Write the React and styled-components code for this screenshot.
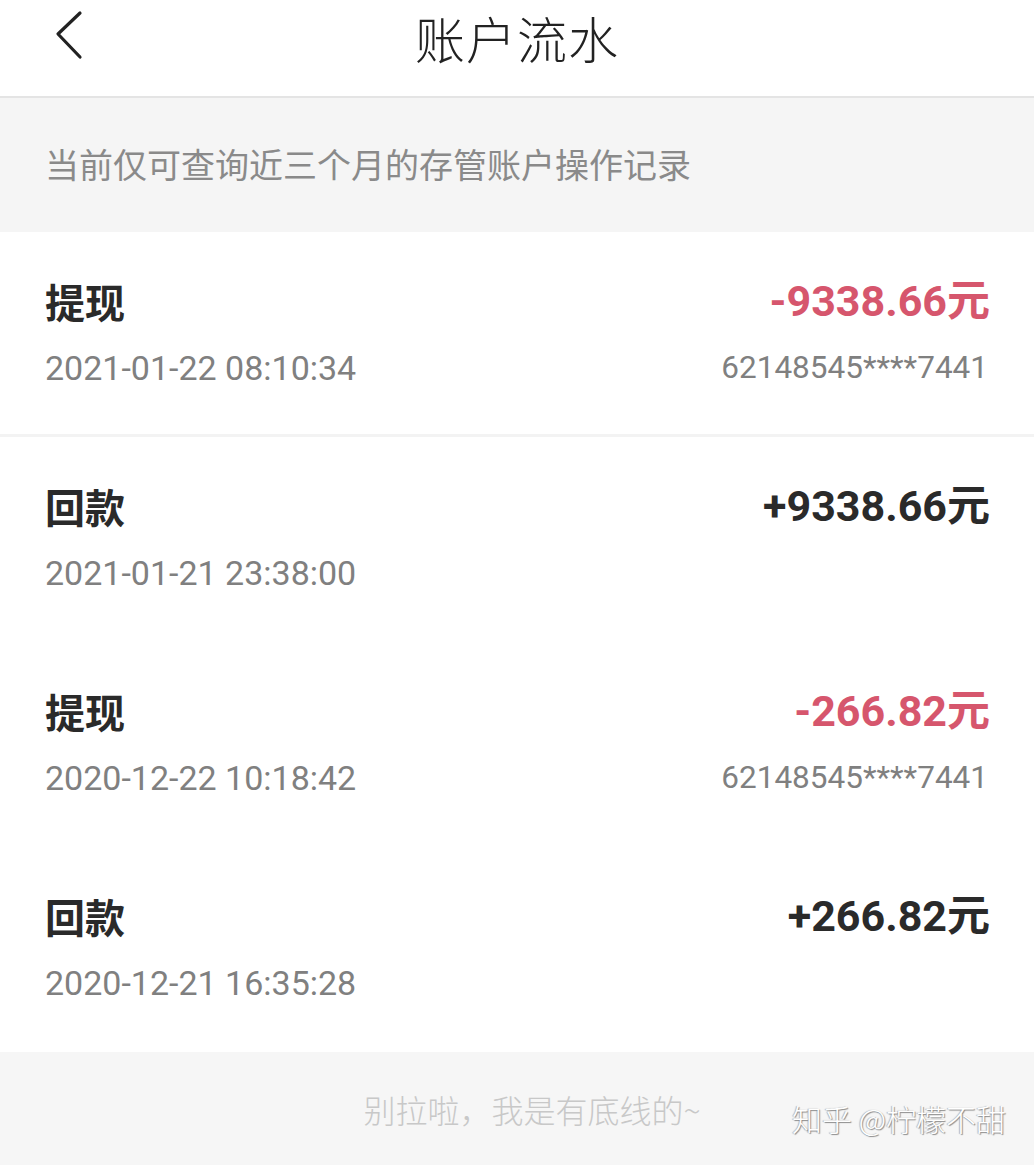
import React from 'react'
import styled, { createGlobalStyle } from 'styled-components'

const GlobalStyle = createGlobalStyle`
    html, body {
        margin: 0;
        padding: 0;
        background: #ffffff;
    }
    * {
        box-sizing: border-box;
    }
`

const Page = styled.div`
    width: 1034px;
    min-height: 1165px;
    display: flex;
    flex-direction: column;
    font-family: Roboto, "Noto Sans CJK SC", sans-serif;
    background: #ffffff;
`

const Header = styled.header`
    height: 98px;
    display: flex;
    align-items: flex-start;
    justify-content: center;
    position: relative;
    padding-top: 6px;
    border-bottom: 2px solid #e4e4e4;
    background: #ffffff;
`

const BackButton = styled.button`
    position: absolute;
    left: 50px;
    top: 8px;
    width: 40px;
    height: 54px;
    padding: 0;
    border: none;
    background: none;
    display: flex;
    align-items: center;
    justify-content: center;
`

const Title = styled.h1`
    margin: 0;
    font-family: "Noto Sans CJK SC", sans-serif;
    font-weight: 300;
    font-size: 50px;
    line-height: 62px;
    letter-spacing: 1px;
    color: #222222;
`

const Notice = styled.div`
    height: 134px;
    display: flex;
    align-items: center;
    padding: 0 45px 4px;
    background: #f5f5f5;
    font-family: "Noto Sans CJK SC", sans-serif;
    font-size: 34px;
    color: #8a8a8a;
`

const List = styled.div`
    display: flex;
    flex-direction: column;
    background: #ffffff;
`

const Row = styled.div`
    height: 205px;
    padding: 46px 44px 0 45px;
    display: grid;
    grid-template-columns: 1fr auto;
    grid-template-rows: 46px 44px;
    row-gap: 22px;
    border-bottom: 3px solid ${p => (p.$divided ? '#f3f3f3' : 'transparent')};
`

const Kind = styled.div`
    font-family: "Noto Sans CJK SC", sans-serif;
    font-weight: 700;
    font-size: 40px;
    line-height: 46px;
    color: #2a2a2a;
`

const Amount = styled.div`
    font-family: Roboto, "Noto Sans CJK SC", sans-serif;
    font-weight: 700;
    font-size: 43px;
    line-height: 46px;
    text-align: right;
    color: ${p => (p.$negative ? '#d6566d' : '#2a2a2a')};
`

const Time = styled.div`
    font-family: Roboto, sans-serif;
    font-size: 34px;
    line-height: 44px;
    color: #808080;
`

const Card = styled.div`
    font-family: Roboto, sans-serif;
    font-size: 31.5px;
    line-height: 44px;
    text-align: right;
    color: #808080;
    padding-right: 2px;
`

const Footer = styled.footer`
    flex: 1;
    min-height: 113px;
    display: flex;
    align-items: center;
    justify-content: center;
    position: relative;
    background: #f6f6f6;
    padding: 0 0 0 30px;
`

const FooterText = styled.span`
    font-family: "Noto Sans CJK SC", sans-serif;
    font-size: 32px;
    font-weight: 300;
    color: #c8c8c8;
`

const Watermark = styled.span`
    position: absolute;
    right: 28px;
    top: 44px;
    font-family: "Noto Sans CJK SC", sans-serif;
    font-size: 30px;
    font-weight: 300;
    color: #ffffff;
    text-shadow: 1px 1px 1px #8a8a8a, -1px 0 1px #b0b0b0;
`

const records = [
    { kind: '提现', amount: '-9338.66元', time: '2021-01-22 08:10:34', card: '62148545****7441' },
    { kind: '回款', amount: '+9338.66元', time: '2021-01-21 23:38:00' },
    { kind: '提现', amount: '-266.82元', time: '2020-12-22 10:18:42', card: '62148545****7441' },
    { kind: '回款', amount: '+266.82元', time: '2020-12-21 16:35:28' },
]

const App = () => {
    return (
        <Page>
            <GlobalStyle />
            <Header>
                <BackButton aria-label="返回">
                    <svg width="40" height="54" viewBox="0 0 40 54" fill="none">
                        <path d="M30 5 L8 26 L30 49" stroke="#222" strokeWidth="3.2" strokeLinecap="round" strokeLinejoin="round" />
                    </svg>
                </BackButton>
                <Title>账户流水</Title>
            </Header>
            <Notice>当前仅可查询近三个月的存管账户操作记录</Notice>
            <List>
                {records.map((r, i) => (
                    <Row key={i} $divided={i === 0}>
                        <Kind>{r.kind}</Kind>
                        <Amount $negative={r.amount.startsWith('-')}>{r.amount}</Amount>
                        <Time>{r.time}</Time>
                        <Card>{r.card || ''}</Card>
                    </Row>
                ))}
            </List>
            <Footer>
                <FooterText>别拉啦，我是有底线的~</FooterText>
                <Watermark>知乎 @柠檬不甜</Watermark>
            </Footer>
        </Page>
    )
}

export default App
